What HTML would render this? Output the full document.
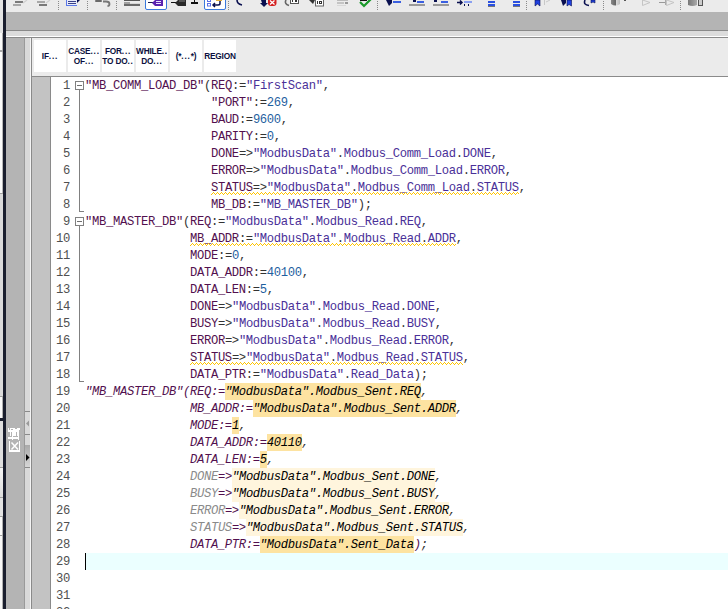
<!DOCTYPE html>
<html><head><meta charset="utf-8"><style>
*{margin:0;padding:0;box-sizing:border-box}
html,body{width:728px;height:609px;overflow:hidden;background:#ebebeb;font-family:"Liberation Sans",sans-serif}
.a{position:absolute}
.ln{position:absolute;left:85px;height:17px;line-height:17px;font-family:"Liberation Mono",monospace;font-size:12.2px;letter-spacing:-0.32px;white-space:pre}
.it{font-style:italic}
.hlo{position:absolute;height:17px;background:#fde3a1}
.hlc{position:absolute;height:17px;background:#fff5dd}
.num{position:absolute;left:40px;width:30px;text-align:right;height:17px;line-height:17px;font-family:"Liberation Mono",monospace;font-size:12.2px;letter-spacing:-0.32px;color:#505050}
.sq{position:absolute;height:4px;background-image:linear-gradient(45deg,transparent 35%,#f2c200 35%,#f2c200 65%,transparent 65%),linear-gradient(-45deg,transparent 35%,#f2c200 35%,#f2c200 65%,transparent 65%);background-size:4px 4px;background-repeat:repeat-x}
.kb{position:absolute;top:40px;width:32px;height:32px;background:#fff;color:#0c1040;font-size:8.3px;font-weight:bold;letter-spacing:-0.2px;white-space:nowrap;text-align:center;display:flex;align-items:center;justify-content:center;line-height:10px}
.fold{position:absolute;left:75px;width:9px;height:9px;border:1px solid #808080;background:#fff}
.fold:after{content:"";position:absolute;left:1px;top:3px;width:5px;height:1px;background:#707070}
</style></head><body>
<!-- left strip -->
<div class="a" style="left:0;top:0;width:3px;height:609px;background:#e0e0e0"></div>
<div class="a" style="left:3px;top:0;width:3px;height:609px;background:#1a1e2e"></div>
<!-- toolbar -->
<div class="a" style="left:6px;top:0;width:722px;height:12px;background:#ebebeb"></div>
<svg class="a" style="left:0;top:0" width="728" height="12" viewBox="0 0 728 12">
<g fill="#8a8a8a">
<rect x="58" y="1" width="1" height="1"/><rect x="58" y="3" width="1" height="1"/><rect x="58" y="5" width="1" height="1"/><rect x="58" y="7" width="1" height="1"/><rect x="58" y="9" width="1" height="1"/>
<rect x="87" y="1" width="1" height="1"/><rect x="87" y="3" width="1" height="1"/><rect x="87" y="5" width="1" height="1"/><rect x="87" y="7" width="1" height="1"/><rect x="87" y="9" width="1" height="1"/>
<rect x="116" y="1" width="1" height="1"/><rect x="116" y="3" width="1" height="1"/><rect x="116" y="5" width="1" height="1"/><rect x="116" y="7" width="1" height="1"/><rect x="116" y="9" width="1" height="1"/>
<rect x="228" y="1" width="1" height="1"/><rect x="228" y="3" width="1" height="1"/><rect x="228" y="5" width="1" height="1"/><rect x="228" y="7" width="1" height="1"/><rect x="228" y="9" width="1" height="1"/>
<rect x="377" y="1" width="1" height="1"/><rect x="377" y="3" width="1" height="1"/><rect x="377" y="5" width="1" height="1"/><rect x="377" y="7" width="1" height="1"/><rect x="377" y="9" width="1" height="1"/>
<rect x="526" y="1" width="1" height="1"/><rect x="526" y="3" width="1" height="1"/><rect x="526" y="5" width="1" height="1"/><rect x="526" y="7" width="1" height="1"/><rect x="526" y="9" width="1" height="1"/>
<rect x="603" y="1" width="1" height="1"/><rect x="603" y="3" width="1" height="1"/><rect x="603" y="5" width="1" height="1"/><rect x="603" y="7" width="1" height="1"/><rect x="603" y="9" width="1" height="1"/>
<rect x="680" y="1" width="1" height="1"/><rect x="680" y="3" width="1" height="1"/><rect x="680" y="5" width="1" height="1"/><rect x="680" y="7" width="1" height="1"/><rect x="680" y="9" width="1" height="1"/>
</g>
<!-- icon1,2 -->
<rect x="15" y="1" width="8" height="2" fill="#7a7a7a"/><rect x="13" y="4" width="8" height="2" fill="#a8a8a8"/>
<path d="M23 3 L27 0" stroke="#d0d0d0" stroke-width="1.2"/>
<rect x="37" y="1" width="8" height="2" fill="#a8a8a8"/><rect x="39" y="4" width="8" height="2" fill="#7a7a7a"/>
<path d="M46 3 L50 0" stroke="#d0d0d0" stroke-width="1.2"/>
<!-- doc icon -->
<rect x="66" y="0" width="11" height="6" fill="#5a78e8"/><rect x="67" y="0" width="10" height="5" fill="#e8ecfa"/>
<rect x="68" y="1" width="8" height="1" fill="#3a4088"/><rect x="68" y="3" width="8" height="1" fill="#3a4088"/>
<path d="M77 0 L80 0 L77 3 Z" fill="#0a1050"/>
<!-- undo-ish -->
<rect x="95" y="0" width="7" height="2" rx="1" fill="#6a6a6a"/>
<path d="M103 1.5 L106 1.5 Q109.5 1.5 109.5 4 Q109.5 6 107.5 6" stroke="#777" stroke-width="1.8" fill="none"/>
<!-- icon 8 -->
<rect x="124" y="0" width="16" height="1" fill="#555"/>
<rect x="124" y="2" width="6" height="2" fill="#a0a0a0"/><rect x="124" y="4" width="16" height="2" fill="#6a6a6a"/><rect x="130" y="3" width="10" height="1" fill="#d8d8d8"/>
<!-- button1 -->
<rect x="145.5" y="-2" width="21" height="11.5" rx="1.5" fill="#fff" stroke="#3a78dc" stroke-width="1"/>
<rect x="148" y="2" width="5" height="1" fill="#1a1a50"/>
<path d="M152 3 L155 0 L163 0 L163 6 L155 6 Z" fill="#5a22b0"/>
<rect x="156" y="1" width="5" height="1" fill="#e8e0ff"/><rect x="156" y="3" width="5" height="1" fill="#e8e0ff"/>
<!-- black tag -->
<rect x="171" y="2" width="5" height="1" fill="#111"/>
<path d="M175 3 L178 0 L186 0 L186 6 L178 6 Z" fill="#2a2a2a"/><rect x="179" y="0" width="6" height="2" fill="#555"/>
<!-- minus -->
<rect x="191" y="2" width="7" height="2" fill="#111"/><rect x="194" y="0" width="1" height="2" fill="#111"/>
<!-- button2 -->
<rect x="204.5" y="-2" width="21" height="11.5" rx="1.5" fill="#fff" stroke="#3a78dc" stroke-width="1"/>
<rect x="207.5" y="-0.5" width="3" height="2" fill="none" stroke="#5a70e8"/><rect x="207.5" y="3.5" width="3" height="2.5" fill="none" stroke="#5a70e8"/>
<path d="M220 1 L220 3.5 Q220 5 218 5 L213 5 M215 3 L213 5 L215 7" stroke="#0a1050" stroke-width="1.5" fill="none"/>
<rect x="216" y="0" width="6" height="1" fill="#e0b040"/>
<!-- arc -->
<path d="M237 0 Q237 4 242 5" stroke="#0a1050" stroke-width="1.6" fill="none"/>
<!-- down arrow + red -->
<path d="M261 0 L266 0 L266 3 L268 3 L264 7 L260 3 L262 3 Z" fill="#0a1050"/>
<rect x="268" y="-3" width="8.5" height="9" rx="3" fill="#d42020"/>
<path d="M270 0.5 L274.5 4.5 M274.5 0.5 L270 4.5" stroke="#fff" stroke-width="1.3"/>
<!-- gray arc + box -->
<path d="M286 0 Q284 4 289 5.5" stroke="#666" stroke-width="1.6" fill="none"/>
<rect x="290.5" y="-1" width="8" height="4.5" fill="#fff" stroke="#555"/><rect x="292" y="0" width="1" height="2" fill="#333"/><rect x="295" y="0" width="2" height="2" fill="#333"/>
<!-- dark arrow + box -->
<path d="M309 0 L315 0 L313 4 Z" fill="#333"/>
<rect x="315.5" y="-1" width="8" height="7" fill="#fff" stroke="#666"/><rect x="317" y="1" width="1" height="3" fill="#333"/><rect x="319" y="1" width="3" height="3" fill="#333"/><rect x="320" y="2" width="1" height="1" fill="#fff"/>
<!-- light lines -->
<rect x="337" y="0" width="11" height="1" fill="#bbb"/><rect x="337" y="2" width="7" height="2" fill="#c4c4c4"/><rect x="345" y="2" width="3" height="2" fill="#999"/><rect x="337" y="5" width="9" height="1" fill="#d8d8d8"/>
<!-- check -->
<rect x="360" y="0" width="7" height="1" fill="#111"/>
<path d="M360 2 L364 6 L371 -1" stroke="#1a9a2a" stroke-width="2.2" fill="none"/>
<!-- indent icons -->
<path d="M386 0 L392 0 L392 3 L389 6 Z" fill="#0a1050"/><rect x="393" y="1" width="8" height="2" fill="#3a5fe0"/>
<rect x="413" y="0" width="3" height="2" fill="#0a1050"/><rect x="417" y="1" width="7" height="2" fill="#3a5fe0"/><rect x="409" y="4" width="16" height="2" fill="#9a9a9a"/>
<rect x="434" y="0" width="3" height="2" fill="#0a1050"/><rect x="441" y="1" width="7" height="2" fill="#3a5fe0"/><rect x="433" y="4" width="16" height="2" fill="#9a9a9a"/>
<path d="M457 2.5 L462 2.5 M460 0.5 L462 2.5 L460 4.5" stroke="#0a1050" stroke-width="1.5" fill="none"/>
<rect x="464" y="1" width="8" height="2" fill="#8aa0f0"/><rect x="464" y="4" width="1" height="2" fill="#0a1050"/><rect x="468" y="4" width="1" height="2" fill="#0a1050"/>
<!-- blue double bars -->
<rect x="488" y="1" width="7" height="2" fill="#2a50e0"/><rect x="488" y="4" width="7" height="2" fill="#2a50e0"/><rect x="488" y="6" width="7" height="1" fill="#777"/>
<rect x="513" y="1" width="7" height="2" fill="#2a50e0"/><rect x="513" y="4" width="7" height="2" fill="#2a50e0"/><rect x="513" y="6" width="7" height="1" fill="#777"/>
<!-- bookmarks -->
<path d="M535 0 L540 0 L540 6 L537.5 4 L535 6 Z" fill="#2040e0" stroke="#0a1050" stroke-width="0.6"/>
<rect x="544" y="0" width="1" height="5" fill="#c8c8c8"/><path d="M546 2 L550 0" stroke="#c8c8c8"/>
<path d="M561 0 L566 0 L566 3 L563 6 Z" fill="#0a1050"/>
<path d="M567 0 L571.5 0 L571.5 6 L569 4.5 L567 6 Z" fill="#2040e0" stroke="#0a1050" stroke-width="0.6"/>
<path d="M585 0 Q583 5 589 5.5" stroke="#0a1050" stroke-width="1.6" fill="none"/>
<path d="M591 0 L595 0 L595 3 L593 2 L591 3 Z" fill="#2040e0" stroke="#0a1050" stroke-width="0.6"/>
<!-- cylinder -->
<defs><linearGradient id="cy" x1="0" x2="1"><stop offset="0" stop-color="#888"/><stop offset="0.5" stop-color="#666"/><stop offset="0.55" stop-color="#ddd"/><stop offset="1" stop-color="#bbb"/></linearGradient>
<linearGradient id="cy2" x1="0" x2="1"><stop offset="0" stop-color="#777"/><stop offset="1" stop-color="#aaa"/></linearGradient></defs>
<path d="M611 0 L620 0 L620 4 Q615.5 7 611 4 Z" fill="url(#cy)"/>
<rect x="624" y="0" width="2" height="1" fill="#555"/>
<path d="M642.5 0 L650 2.5 L642.5 5.5 Z" fill="none" stroke="#c4c4c4"/>
<rect x="659" y="2" width="7" height="1" fill="#999"/><rect x="665" y="0" width="1" height="5" fill="#aaa"/><path d="M666.5 0 L674 2.5 L666.5 5.5 Z" fill="none" stroke="#c4c4c4"/>
<path d="M688 0 L697 0 L697 5 Q692.5 7 688 5 Z" fill="url(#cy2)"/>
<rect x="698.5" y="-1" width="4" height="6.5" fill="#ccc" stroke="#555"/>
</svg>

<div class="a" style="left:6px;top:12px;width:722px;height:18px;background:#b4b4b4"></div>
<div class="a" style="left:6px;top:30px;width:722px;height:1px;background:#8a8a8a"></div>
<div class="a" style="left:6px;top:31px;width:722px;height:5px;background:#dcdcdc"></div>
<div class="a" style="left:6px;top:36px;width:722px;height:1px;background:#ffffff"></div>
<div class="a" style="left:6px;top:37px;width:722px;height:1px;background:#8a8a8a"></div>
<!-- left panel -->
<div class="a" style="left:6px;top:38px;width:18px;height:571px;background:#b4b4b4"></div>
<div class="a" style="left:24px;top:38px;width:1px;height:571px;background:#9a9a9a"></div>
<div class="a" style="left:25px;top:38px;width:5px;height:571px;background:#d9d9d9"></div>
<div class="a" style="left:30px;top:38px;width:1px;height:571px;background:#f4f4f4"></div>
<div class="a" style="left:31px;top:37px;width:1px;height:572px;background:#8a8a8a"></div>
<!-- scroll strip segments -->
<div class="a" style="left:25px;top:411px;width:5px;height:1px;background:#8a8a8a"></div>
<div class="a" style="left:25px;top:434px;width:5px;height:1px;background:#8a8a8a"></div>
<div class="a" style="left:25px;top:445px;width:5px;height:22px;background:linear-gradient(#a9a9a9,#d6d6d6)"></div>
<div class="a" style="left:25px;top:467px;width:5px;height:1px;background:#8a8a8a"></div>
<svg class="a" style="left:24px;top:418px" width="8" height="48">
<path d="M2 5.5 L5 2.5 L5 8.5 Z" fill="#9a9a9a"/>
<path d="M2 36 L5.5 39.5 L2 43 Z" fill="#000"/>
</svg>
<!-- vertical tab text -->
<svg class="a" style="left:6px;top:424px" width="18" height="32"><rect x="2" y="4" width="12" height="4" fill="#fff"/><rect x="3" y="4" width="1" height="2" fill="#b4b4b4"/><rect x="5" y="5" width="2" height="1" fill="#b4b4b4"/><rect x="9" y="4" width="2" height="1" fill="#b4b4b4"/><rect x="13" y="6" width="1" height="2" fill="#b4b4b4"/><rect x="4" y="8" width="1" height="4" fill="#fff"/><rect x="6" y="8" width="4" height="4" fill="#fff"/><rect x="11" y="8" width="2" height="4" fill="#fff"/><rect x="6" y="12" width="1" height="1" fill="#fff"/><rect x="12" y="12" width="1" height="1" fill="#fff"/><rect x="2" y="13" width="11" height="2" fill="#fff"/><rect x="6" y="15" width="1" height="1" fill="#fff"/><rect x="12" y="15" width="1" height="1" fill="#fff"/><rect x="3" y="17" width="1" height="11" fill="#fff"/><rect x="13" y="17" width="1" height="11" fill="#fff"/><rect x="3" y="26" width="11" height="2" fill="#fff"/><path d="M5.5 18.5 L12 25.5 M12 18.5 L5.5 25.5" stroke="#fff" stroke-width="1.5"/></svg>
<!-- left far strip boxes -->
<div class="a" style="left:0;top:0;width:3px;height:33px;background:#e4e4e4"></div>
<div class="a" style="left:0;top:33px;width:3px;height:17px;background:#fafafa;border-right:1px solid #b0b0b0"></div>
<div class="a" style="left:0;top:50px;width:3px;height:2px;background:#a8a8a8"></div>
<div class="a" style="left:0;top:52px;width:3px;height:141px;background:#fbfbfb;border-right:1px solid #b8b8b8"></div>
<div class="a" style="left:0;top:193px;width:3px;height:1px;background:#a0a0a0"></div>
<div class="a" style="left:0;top:194px;width:3px;height:202px;background:#dadada"></div>
<div class="a" style="left:0;top:396px;width:3px;height:22px;background:#fafafa;border-top:1px solid #a0a0a0;border-right:1px solid #b0b0b0"></div>
<div class="a" style="left:0;top:418px;width:3px;height:3px;background:#1a1e2e"></div>
<div class="a" style="left:0;top:421px;width:3px;height:46px;background:#dedede"></div>
<div class="a" style="left:0;top:467px;width:3px;height:1px;background:#a0a0a0"></div>
<div class="a" style="left:0;top:468px;width:3px;height:29px;background:linear-gradient(#f4f4f4,#dcdcdc)"></div>
<div class="a" style="left:0;top:497px;width:3px;height:1px;background:#a0a0a0"></div>
<div class="a" style="left:0;top:498px;width:3px;height:18px;background:#e2e2e2"></div>
<div class="a" style="left:0;top:516px;width:3px;height:19px;background:#fafafa;border-top:1px solid #a0a0a0;border-right:1px solid #b0b0b0"></div>
<div class="a" style="left:0;top:535px;width:3px;height:74px;background:#f8f8f8;border-top:1px solid #a0a0a0;border-right:1px solid #b0b0b0"></div>

<!-- keyword bar -->
<div class="a" style="left:32px;top:38px;width:696px;height:38px;background:#ebebeb"></div>
<div class="kb" style="left:34px"><div>IF<span style="letter-spacing:0.8px">...</span></div></div>
<div class="kb" style="left:68px"><div>CASE<span style="letter-spacing:0.8px">...</span><br>OF<span style="letter-spacing:0.8px">...</span></div></div>
<div class="kb" style="left:102px"><div>FOR<span style="letter-spacing:0.8px">...</span><br>TO DO<span style="letter-spacing:0.8px">..</span></div></div>
<div class="kb" style="left:136px"><div>WHILE<span style="letter-spacing:0.8px">..</span><br>DO<span style="letter-spacing:0.8px">...</span></div></div>
<div class="kb" style="left:170px"><div>(*<span style="letter-spacing:0.8px">...</span>*)</div></div>
<div class="kb" style="left:204px"><div>REGION</div></div>
<div class="a" style="left:31px;top:76px;width:697px;height:1px;background:#8a8a8a"></div>
<!-- gutter -->
<div class="a" style="left:32px;top:77px;width:18px;height:532px;background:#c3c3c3"></div>
<div class="a" style="left:50px;top:77px;width:1px;height:532px;background:#8a8a8a"></div>
<div class="a" style="left:51px;top:77px;width:677px;height:532px;background:#ffffff"></div>
<!-- current line -->
<div class="a" style="left:86px;top:553px;width:642px;height:17px;background:#ebffff"></div>
<div class="a" style="left:85px;top:553px;width:1px;height:17px;background:#000"></div>
<div class="num" style="top:78px">1</div><div class="num" style="top:95px">2</div><div class="num" style="top:112px">3</div><div class="num" style="top:129px">4</div><div class="num" style="top:146px">5</div><div class="num" style="top:163px">6</div><div class="num" style="top:180px">7</div><div class="num" style="top:197px">8</div><div class="num" style="top:214px">9</div><div class="num" style="top:231px">10</div><div class="num" style="top:248px">11</div><div class="num" style="top:265px">12</div><div class="num" style="top:282px">13</div><div class="num" style="top:299px">14</div><div class="num" style="top:316px">15</div><div class="num" style="top:333px">16</div><div class="num" style="top:350px">17</div><div class="num" style="top:367px">18</div><div class="num" style="top:384px">19</div><div class="num" style="top:401px">20</div><div class="num" style="top:418px">21</div><div class="num" style="top:435px">22</div><div class="num" style="top:452px">23</div><div class="num" style="top:469px">24</div><div class="num" style="top:486px">25</div><div class="num" style="top:503px">26</div><div class="num" style="top:520px">27</div><div class="num" style="top:537px">28</div><div class="num" style="top:554px">29</div><div class="num" style="top:571px">30</div><div class="num" style="top:588px">31</div><div class="num" style="top:605px">32</div>
<div class="fold" style="top:81px"></div>
<div class="a" style="left:79px;top:90px;width:1px;height:122px;background:#808080"></div>
<div class="a" style="left:79px;top:211px;width:5px;height:1px;background:#808080"></div>
<div class="fold" style="top:217px"></div>
<div class="a" style="left:79px;top:226px;width:1px;height:156px;background:#808080"></div>
<div class="a" style="left:79px;top:381px;width:5px;height:1px;background:#808080"></div>
<div class="ln" style="top:78px"><span style="color:#52104e">&quot;MB_COMM_LOAD_DB&quot;</span><span style="color:#333333">(</span><span style="color:#52104e">REQ</span><span style="color:#333333">:=</span><span style="color:#4a3098">&quot;FirstScan&quot;</span><span style="color:#333333">,</span></div><div class="ln" style="top:95px"><span style="color:#333333">                  </span><span style="color:#52104e">&quot;PORT&quot;</span><span style="color:#333333">:=</span><span style="color:#1f5f9f">269</span><span style="color:#333333">,</span></div><div class="ln" style="top:112px"><span style="color:#333333">                  </span><span style="color:#52104e">BAUD</span><span style="color:#333333">:=</span><span style="color:#1f5f9f">9600</span><span style="color:#333333">,</span></div><div class="ln" style="top:129px"><span style="color:#333333">                  </span><span style="color:#52104e">PARITY</span><span style="color:#333333">:=</span><span style="color:#1f5f9f">0</span><span style="color:#333333">,</span></div><div class="ln" style="top:146px"><span style="color:#333333">                  </span><span style="color:#52104e">DONE</span><span style="color:#333333">=&gt;</span><span style="color:#4a3098">&quot;ModbusData&quot;</span><span style="color:#333333">.</span><span style="color:#4a3098">Modbus_Comm_Load</span><span style="color:#333333">.</span><span style="color:#4a3098">DONE</span><span style="color:#333333">,</span></div><div class="ln" style="top:163px"><span style="color:#333333">                  </span><span style="color:#52104e">ERROR</span><span style="color:#333333">=&gt;</span><span style="color:#4a3098">&quot;ModbusData&quot;</span><span style="color:#333333">.</span><span style="color:#4a3098">Modbus_Comm_Load</span><span style="color:#333333">.</span><span style="color:#4a3098">ERROR</span><span style="color:#333333">,</span></div><div class="ln" style="top:180px"><span style="color:#333333">                  </span><span style="color:#52104e">STATUS</span><span style="color:#333333">=&gt;</span><span style="color:#4a3098">&quot;ModbusData&quot;</span><span style="color:#333333">.</span><span style="color:#4a3098">Modbus_Comm_Load</span><span style="color:#333333">.</span><span style="color:#4a3098">STATUS</span><span style="color:#333333">,</span></div><div class="ln" style="top:197px"><span style="color:#333333">                  </span><span style="color:#52104e">MB_DB</span><span style="color:#333333">:=</span><span style="color:#4a3098">&quot;MB_MASTER_DB&quot;</span><span style="color:#333333">);</span></div><div class="ln" style="top:214px"><span style="color:#52104e">&quot;MB_MASTER_DB&quot;</span><span style="color:#333333">(</span><span style="color:#52104e">REQ</span><span style="color:#333333">:=</span><span style="color:#4a3098">&quot;ModbusData&quot;</span><span style="color:#333333">.</span><span style="color:#4a3098">Modbus_Read</span><span style="color:#333333">.</span><span style="color:#4a3098">REQ</span><span style="color:#333333">,</span></div><div class="ln" style="top:231px"><span style="color:#333333">               </span><span style="color:#52104e">MB_ADDR</span><span style="color:#333333">:=</span><span style="color:#4a3098">&quot;ModbusData&quot;</span><span style="color:#333333">.</span><span style="color:#4a3098">Modbus_Read</span><span style="color:#333333">.</span><span style="color:#4a3098">ADDR</span><span style="color:#333333">,</span></div><div class="ln" style="top:248px"><span style="color:#333333">               </span><span style="color:#52104e">MODE</span><span style="color:#333333">:=</span><span style="color:#1f5f9f">0</span><span style="color:#333333">,</span></div><div class="ln" style="top:265px"><span style="color:#333333">               </span><span style="color:#52104e">DATA_ADDR</span><span style="color:#333333">:=</span><span style="color:#1f5f9f">40100</span><span style="color:#333333">,</span></div><div class="ln" style="top:282px"><span style="color:#333333">               </span><span style="color:#52104e">DATA_LEN</span><span style="color:#333333">:=</span><span style="color:#1f5f9f">5</span><span style="color:#333333">,</span></div><div class="ln" style="top:299px"><span style="color:#333333">               </span><span style="color:#52104e">DONE</span><span style="color:#333333">=&gt;</span><span style="color:#4a3098">&quot;ModbusData&quot;</span><span style="color:#333333">.</span><span style="color:#4a3098">Modbus_Read</span><span style="color:#333333">.</span><span style="color:#4a3098">DONE</span><span style="color:#333333">,</span></div><div class="ln" style="top:316px"><span style="color:#333333">               </span><span style="color:#52104e">BUSY</span><span style="color:#333333">=&gt;</span><span style="color:#4a3098">&quot;ModbusData&quot;</span><span style="color:#333333">.</span><span style="color:#4a3098">Modbus_Read</span><span style="color:#333333">.</span><span style="color:#4a3098">BUSY</span><span style="color:#333333">,</span></div><div class="ln" style="top:333px"><span style="color:#333333">               </span><span style="color:#52104e">ERROR</span><span style="color:#333333">=&gt;</span><span style="color:#4a3098">&quot;ModbusData&quot;</span><span style="color:#333333">.</span><span style="color:#4a3098">Modbus_Read</span><span style="color:#333333">.</span><span style="color:#4a3098">ERROR</span><span style="color:#333333">,</span></div><div class="ln" style="top:350px"><span style="color:#333333">               </span><span style="color:#52104e">STATUS</span><span style="color:#333333">=&gt;</span><span style="color:#4a3098">&quot;ModbusData&quot;</span><span style="color:#333333">.</span><span style="color:#4a3098">Modbus_Read</span><span style="color:#333333">.</span><span style="color:#4a3098">STATUS</span><span style="color:#333333">,</span></div><div class="ln" style="top:367px"><span style="color:#333333">               </span><span style="color:#52104e">DATA_PTR</span><span style="color:#333333">:=</span><span style="color:#4a3098">&quot;ModbusData&quot;</span><span style="color:#333333">.</span><span style="color:#4a3098">Read_Data</span><span style="color:#333333">);</span></div><div class="hlo" style="left:225px;top:383px;width:196px"></div><div class="ln it" style="top:384px"><span style="color:#52104e">&quot;MB_MASTER_DB&quot;(REQ:=</span><span style="color:#000000">&quot;ModbusData&quot;.Modbus_Sent.REQ</span><span style="color:#333333">,</span></div><div class="hlo" style="left:253px;top:400px;width:203px"></div><div class="ln it" style="top:401px"><span style="color:#52104e">               MB_ADDR:=</span><span style="color:#000000">&quot;ModbusData&quot;.Modbus_Sent.ADDR</span><span style="color:#333333">,</span></div><div class="hlo" style="left:232px;top:417px;width:7px"></div><div class="ln it" style="top:418px"><span style="color:#52104e">               MODE:=</span><span style="color:#000000">1</span><span style="color:#333333">,</span></div><div class="hlo" style="left:267px;top:434px;width:35px"></div><div class="ln it" style="top:435px"><span style="color:#52104e">               DATA_ADDR:=</span><span style="color:#000000">40110</span><span style="color:#333333">,</span></div><div class="hlo" style="left:260px;top:451px;width:7px"></div><div class="ln it" style="top:452px"><span style="color:#52104e">               DATA_LEN:=</span><span style="color:#000000">5</span><span style="color:#333333">,</span></div><div class="hlc" style="left:232px;top:468px;width:203px"></div><div class="ln it" style="top:469px"><span style="color:#8a8a8a">               DONE</span><span style="color:#52104e">=&gt;</span><span style="color:#000000">&quot;ModbusData&quot;.Modbus_Sent.DONE</span><span style="color:#333333">,</span></div><div class="hlc" style="left:232px;top:485px;width:203px"></div><div class="ln it" style="top:486px"><span style="color:#8a8a8a">               BUSY</span><span style="color:#52104e">=&gt;</span><span style="color:#000000">&quot;ModbusData&quot;.Modbus_Sent.BUSY</span><span style="color:#333333">,</span></div><div class="hlc" style="left:239px;top:502px;width:210px"></div><div class="ln it" style="top:503px"><span style="color:#8a8a8a">               ERROR</span><span style="color:#52104e">=&gt;</span><span style="color:#000000">&quot;ModbusData&quot;.Modbus_Sent.ERROR</span><span style="color:#333333">,</span></div><div class="hlc" style="left:246px;top:519px;width:217px"></div><div class="ln it" style="top:520px"><span style="color:#8a8a8a">               STATUS</span><span style="color:#52104e">=&gt;</span><span style="color:#000000">&quot;ModbusData&quot;.Modbus_Sent.STATUS</span><span style="color:#333333">,</span></div><div class="hlo" style="left:260px;top:536px;width:154px"></div><div class="ln it" style="top:537px"><span style="color:#52104e">               DATA_PTR:=</span><span style="color:#000000">&quot;ModbusData&quot;.Sent_Data</span><span style="color:#52104e">)</span><span style="color:#333333">;</span></div>
<svg width="0" height="0" style="position:absolute"><defs><pattern id="zz" width="4" height="3" patternUnits="userSpaceOnUse"><rect x="0" y="2" width="1" height="1" fill="#ffc400"/><rect x="1" y="1" width="1" height="1" fill="#ffc400"/><rect x="2" y="0" width="1" height="1" fill="#ffc400"/><rect x="3" y="1" width="1" height="1" fill="#ffc400"/></pattern></defs></svg>
<svg class="a" style="left:211px;top:192px" width="308" height="3"><rect width="308" height="3" fill="url(#zz)"/></svg><svg class="a" style="left:190px;top:243px" width="266" height="3"><rect width="266" height="3" fill="url(#zz)"/></svg><svg class="a" style="left:190px;top:362px" width="273" height="3"><rect width="273" height="3" fill="url(#zz)"/></svg>
</body></html>
